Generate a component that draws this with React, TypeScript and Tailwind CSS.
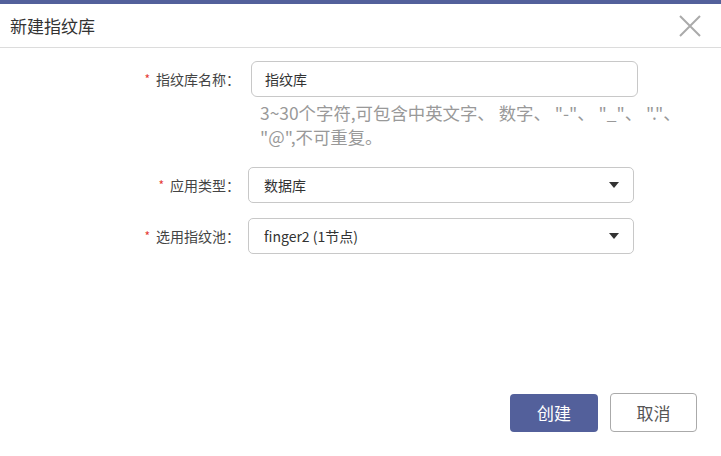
import React from 'react';

const font = { fontFamily: '"Noto Sans CJK SC", "Noto Sans", sans-serif' };

function Caret() {
  return (
    <svg width="10" height="6" viewBox="0 0 10 6" className="shrink-0">
      <path d="M0 0h10L5 6z" fill="#333" />
    </svg>
  );
}

export default function App() {
  return (
    <div className="w-[721px] h-[456px] bg-white flex flex-col overflow-hidden" style={font}>
      <div className="h-[4px] bg-[#53609b]" />
      {/* header */}
      <div className="h-[44px] flex items-center justify-between pl-[10px] pr-[20px] border-b border-[#dcdcdc]">
        <span className="text-[17px] text-[#333]">新建指纹库</span>
        <svg width="22" height="22" viewBox="0 0 22 22">
          <path d="M1 1L21 21M21 1L1 21" stroke="#aaa" strokeWidth="2" />
        </svg>
      </div>

      {/* form */}
      <div className="flex flex-col pt-[13px]">
        <div className="flex">
          <div className="w-[240px] h-[36px] flex items-center justify-end text-[14px] text-[#444]">
            <span className="text-[#e53935] text-[12px] mr-[6px]">*</span>指纹库名称：
          </div>
          <div className="ml-[11px] flex flex-col">
            <div className="w-[387px] h-[36px] border border-[#c8c8c8] rounded-[6px] flex items-center px-[13px] text-[14px] text-[#333]">
              指纹库
            </div>
            <div className="w-[440px] pl-[9px] text-[17.4px] leading-[24px] text-[#999] mt-[4px] whitespace-nowrap">
              3~30个字符,可包含中英文字、 数字、 "-"、 "_"、 "."、
              <br />
              "@",不可重复。
            </div>
          </div>
        </div>

        <div className="flex mt-[18px]">
          <div className="w-[240px] h-[36px] flex items-center justify-end text-[14px] text-[#444]">
            <span className="text-[#e53935] text-[12px] mr-[6px]">*</span>应用类型：
          </div>
          <div className="ml-[8px] w-[386px] h-[36px] border border-[#c8c8c8] rounded-[5px] flex items-center justify-between pl-[15px] pr-[14px] text-[14px] text-[#333]">
            <span>数据库</span>
            <Caret />
          </div>
        </div>

        <div className="flex mt-[15px]">
          <div className="w-[240px] h-[36px] flex items-center justify-end text-[14px] text-[#444]">
            <span className="text-[#e53935] text-[12px] mr-[6px]">*</span>选用指纹池：
          </div>
          <div className="ml-[8px] w-[386px] h-[36px] border border-[#c8c8c8] rounded-[5px] flex items-center justify-between pl-[15px] pr-[14px] text-[14px] text-[#333]">
            <span>finger2 (1节点)</span>
            <Caret />
          </div>
        </div>
      </div>

      {/* footer */}
      <div className="mt-auto flex justify-end items-center gap-[12px] pr-[24px] pb-[24px]">
        <button className="w-[88px] h-[38px] rounded-[4px] bg-[#53609b] text-white text-[17px]">创建</button>
        <button className="w-[87px] h-[39px] rounded-[4px] border border-[#aaa] bg-white text-[#555] text-[17px]">取消</button>
      </div>
    </div>
  );
}
